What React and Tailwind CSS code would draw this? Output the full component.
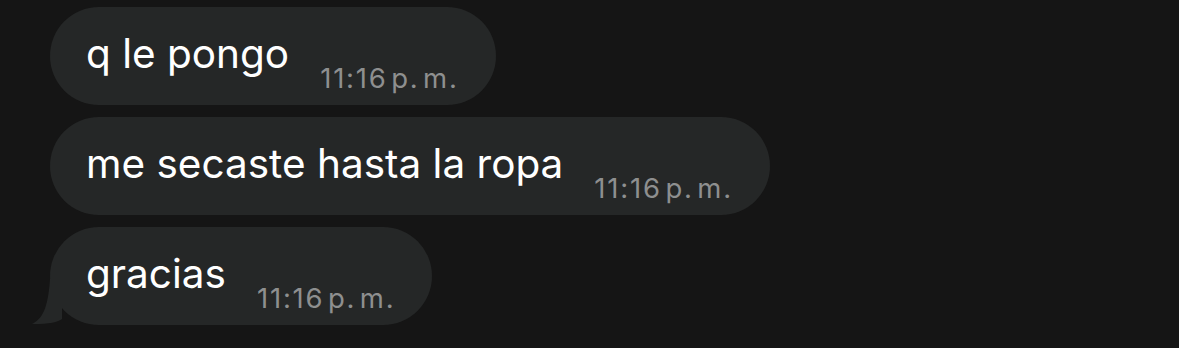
import React from 'react'

const messages = [
  { text: 'q le pongo', time: '11:16 p. m.' },
  { text: 'me secaste hasta la ropa', time: '11:16 p. m.' },
  { text: 'gracias', time: '11:16 p. m.', tail: true },
]

const Bubble = ({ text, time, tail }) => (
  <div className="relative flex items-start h-[98px] rounded-[49px] bg-[#252727] pl-[36px] pr-[37px]">
    {tail && (
      <svg className="absolute left-[-18px] bottom-0" width="40" height="46" viewBox="0 0 40 46">
        <path d="M18 0 L30 0 L30 40 C26 43 18 45 0 45 C10 40 16 30 18 0 Z" fill="#252727" />
      </svg>
    )}
    <span className="text-[40.5px] text-white leading-none mt-[27px]">{text}</span>
    <span className="text-[27.5px] text-[#8e8f8f] leading-none mt-[58px] ml-[31px] tracking-[1.8px] [word-spacing:-6px]">{time}</span>
  </div>
)

const App = () => {
  return (
    <div className="w-[1179px] h-[348px] bg-[#151515] overflow-hidden" style={{ fontFamily: 'Inter, "Noto Sans", sans-serif' }}>
      <div className="flex flex-col items-start gap-[12px] pl-[50px] pt-[7px]">
        {messages.map((m, i) => (
          <Bubble key={i} {...m} />
        ))}
      </div>
    </div>
  )
}

export default App
